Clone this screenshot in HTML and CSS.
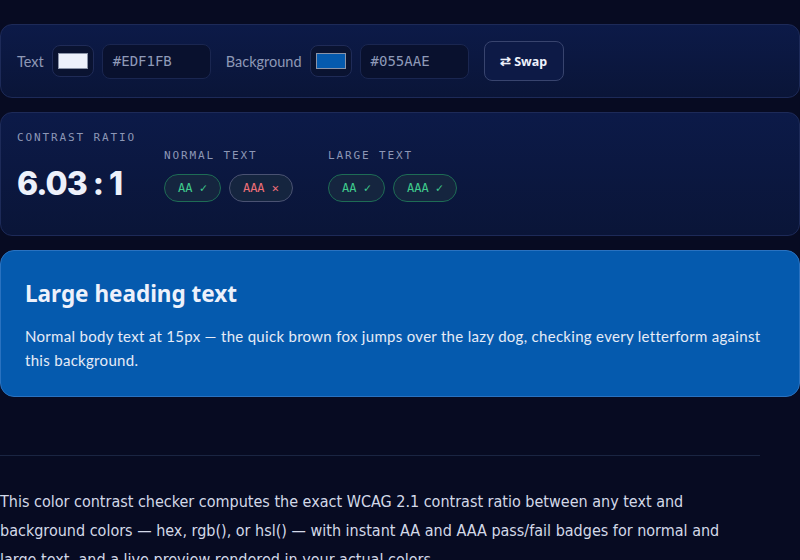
FILE: index.html
```html
<!DOCTYPE html>
<html lang="en">
<head>
<meta charset="utf-8">
<link rel="stylesheet" href="styles.css">
</head>
<body>
<main class="page">
  <section class="card controls">
    <label class="field-label">Text</label>
    <span class="swatch"><span class="chip chip-text"></span></span>
    <span class="hex">#EDF1FB</span>
    <label class="field-label bg-label">Background</label>
    <span class="swatch"><span class="chip chip-bg"></span></span>
    <span class="hex">#055AAE</span>
    <button class="swap">⇄ Swap</button>
  </section>

  <section class="card results">
    <div class="ratio-block">
      <div class="caps">CONTRAST RATIO</div>
      <div class="ratio">6.03 : 1</div>
    </div>
    <div class="group">
      <div class="caps">NORMAL TEXT</div>
      <div class="badges">
        <span class="badge pass">AA ✓</span>
        <span class="badge fail">AAA ✕</span>
      </div>
    </div>
    <div class="group">
      <div class="caps">LARGE TEXT</div>
      <div class="badges">
        <span class="badge pass">AA ✓</span>
        <span class="badge pass">AAA ✓</span>
      </div>
    </div>
  </section>

  <section class="preview">
    <h2 class="preview-title">Large heading text</h2>
    <p class="preview-body">Normal body text at 15px — the quick brown fox jumps over the lazy dog, checking every letterform against this background.</p>
  </section>

  <hr class="divider">

  <p class="about">This color contrast checker computes the exact WCAG 2.1 contrast ratio between any text and background colors — hex, rgb(), or hsl() — with instant AA and AAA pass/fail badges for normal and large text, and a live preview rendered in your actual colors.</p>
</main>
</body>
</html>
```

FILE: styles.css
```css
* { box-sizing: border-box; }
html, body { margin: 0; padding: 0; }
body {
  background: #070b22;
  color: #edf1fb;
  font-family: "Lato", "Noto Sans", sans-serif;
  width: 800px;
  height: 560px;
  overflow: hidden;
}
.page {
  padding-top: 24px;
  display: flex;
  flex-direction: column;
}
.card {
  border: 1px solid #1d2a58;
  border-radius: 12px;
  background: linear-gradient(180deg, #0c1a48 0%, #0a1538 100%);
}
.controls {
  height: 74px;
  display: flex;
  align-items: center;
  padding: 0 16px;
}
.field-label {
  font-family: "Lato", sans-serif;
  font-size: 14.5px;
  color: #8e98b6;
  margin-right: 8px;
}
.bg-label { margin-left: 15px; margin-right: 8px; }
.swatch {
  width: 42px;
  height: 32px;
  border: 1px solid #1f2b57;
  background: #0a1331;
  border-radius: 8px;
  display: flex;
  align-items: center;
  justify-content: center;
}
.chip {
  width: 30px;
  height: 16px;
  border: 1px solid #8a93a8;
}
.chip-text { background: #edf1fb; }
.chip-bg { background: #055aae; }
.hex {
  margin-left: 8px;
  width: 109px;
  height: 35px;
  border: 1px solid #1a2650;
  background: #09112e;
  border-radius: 8px;
  font-family: "DejaVu Sans Mono", monospace;
  font-size: 14px;
  color: #8f9ab8;
  display: flex;
  align-items: center;
  padding-left: 10px;
}
.swap {
  margin-left: 15px;
  width: 80px;
  height: 40px;
  border: 1px solid #38446e;
  background: #0d1a46;
  border-radius: 8px;
  color: #edf1fb;
  font-family: "Noto Sans", sans-serif;
  font-weight: 700;
  font-size: 12.5px;
}
.results {
  margin-top: 14px;
  height: 124px;
  display: flex;
  padding: 18px 16px 0;
}
.caps {
  font-family: "DejaVu Sans Mono", monospace;
  font-size: 11px;
  letter-spacing: 0.17em;
  color: #8d97b5;
}
.ratio-block { width: 147px; }
.ratio {
  margin-top: 20px;
  font-family: "Inter", sans-serif;
  font-weight: 800;
  font-size: 32px;
  letter-spacing: -1px;
  color: #edf1fb;
}
.group { padding-top: 18px; margin-right: 35px; }
.badges { display: flex; gap: 8px; margin-top: 12px; }
.badge {
  height: 28px;
  padding: 0 13px;
  border-radius: 14px;
  display: flex;
  align-items: center;
  font-family: "DejaVu Sans Mono", monospace;
  font-size: 12px;
  background: #15253f;
}
.pass { border: 1px solid #1e6c55; color: #3fcb8d; }
.fail { border: 1px solid #4a5272; color: #ee6f78; }
.preview {
  margin-top: 14px;
  height: 147px;
  background: #055aae;
  border: 1px solid #2a72c0;
  border-radius: 14px;
  padding: 27px 24px 0;
}
.preview-title {
  margin: 0;
  font-family: "Noto Sans", sans-serif;
  font-weight: 700;
  font-size: 22.5px;
  color: #edf1fb;
}
.preview-body {
  margin: 15px 0 0;
  font-family: "Lato", sans-serif;
  font-size: 15px;
  letter-spacing: 0.3px;
  line-height: 24px;
  color: #e6ebf7;
}
.divider {
  margin: 58px 0 0;
  width: 760px;
  border: 0;
  border-top: 1px solid #1a2542;
}
.about {
  margin: 31px 0 0;
  width: 760px;
  font-family: "DejaVu Sans", sans-serif;
  font-stretch: condensed;
  font-size: 16px;
  line-height: 29px;
  color: #d3d9e8;
}
```
